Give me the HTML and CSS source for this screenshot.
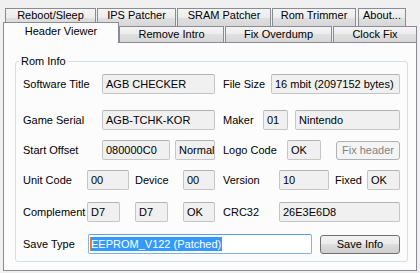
FILE: index.html
```html
<!DOCTYPE html>
<html>
<head>
<meta charset="utf-8">
<title>Header Viewer</title>
<link rel="stylesheet" href="styles.css">
</head>
<body>
<div class="window">
  <div class="tabrow back">
    <div class="tab t-reboot">Reboot/Sleep</div>
    <div class="tab t-ips">IPS Patcher</div>
    <div class="tab t-sram">SRAM Patcher</div>
    <div class="tab t-trim">Rom Trimmer</div>
    <div class="tab t-about">About...</div>
  </div>
  <div class="tabrow front">
    <div class="tab selected t-header">Header Viewer</div>
    <div class="tab t-intro">Remove Intro</div>
    <div class="tab t-overdump">Fix Overdump</div>
    <div class="tab t-clock">Clock Fix</div>
  </div>
  <div class="panel">
    <fieldset class="group">
      <legend>Rom Info</legend>
      <div class="row r1">
        <span class="lbl w79">Software Title</span>
        <span class="box w113">AGB CHECKER</span>
        <span class="lbl w48 gap8">File Size</span>
        <span class="box w129">16 mbit (2097152 bytes)</span>
      </div>
      <div class="row r2">
        <span class="lbl w79">Game Serial</span>
        <span class="box w113">AGB-TCHK-KOR</span>
        <span class="lbl w40 gap8">Maker</span>
        <span class="box w25">01</span>
        <span class="box w105 gap7">Nintendo</span>
      </div>
      <div class="row r3">
        <span class="lbl w79">Start Offset</span>
        <span class="box w68">080000C0</span>
        <span class="box w40 gap5">Normal</span>
        <span class="lbl w64 gap8">Logo Code</span>
        <span class="box w34">OK</span>
        <span class="btn disabled w64 gap15">Fix header</span>
      </div>
      <div class="row r4">
        <span class="lbl w64">Unit Code</span>
        <span class="box w42">00</span>
        <span class="lbl w48 gap6">Device</span>
        <span class="box w32">00</span>
        <span class="lbl w56 gap8">Version</span>
        <span class="box w50">10</span>
        <span class="lbl w32 gap6">Fixed</span>
        <span class="box w33">OK</span>
      </div>
      <div class="row r5">
        <span class="lbl w64">Complement</span>
        <span class="box w33">D7</span>
        <span class="box w33 gap15">D7</span>
        <span class="box w32 gap15">OK</span>
        <span class="lbl w56 gap8">CRC32</span>
        <span class="box w121">26E3E6D8</span>
      </div>
      <div class="row r6">
        <span class="lbl w65">Save Type</span>
        <span class="box input w224"><span class="sel">EEPROM_V122 (Patched)</span></span>
        <span class="btn w80 gap8">Save Info</span>
      </div>
    </fieldset>
  </div>
</div>
</body>
</html>
```

FILE: styles.css
```css
* { box-sizing: border-box; }
html, body { margin: 0; padding: 0; }
body {
  background: #f0f0f0;
  font: 11px "Liberation Sans", Arial, sans-serif;
  color: #000;
  width: 420px;
  height: 273px;
  overflow: hidden;
}
.window { padding-top: 8px; }

/* tabs */
.tabrow { display: flex; }
.back { height: 18px; padding-left: 5px; }
.front { height: 16px; padding-left: 3px; align-items: flex-end; }
.tab {
  border: 1px solid #898c95;
  border-bottom: none;
  background: linear-gradient(#f4f4f4, #ececec 50%, #e0e0e0 50%, #d7d7d7);
  text-align: center;
  line-height: 13px;
  white-space: nowrap;
  margin-right: 1px;
}
.back .tab { height: 18px; padding-top: 0; }
.front .tab { height: 16px; padding-top: 1px; }
.front .selected {
  height: 21px;
  margin-bottom: -1px;
  margin-right: 0;
  padding-top: 2px;
  position: relative;
  z-index: 1;
  background: #fcfcfc;
}
.t-reboot { width: 91px; }
.t-ips { width: 79px; }
.t-sram { width: 94px; }
.t-trim { width: 84px; margin-right: 2px; }
.t-about { width: 48px; }
.t-header { width: 116px; }
.t-intro { width: 105px; }
.t-overdump { width: 107px; }
.t-clock { width: 84px; margin-right: 0; }

/* panel */
.panel {
  margin-left: 3px;
  width: 414px;
  height: 229px;
  border: 1px solid #898c95;
  background: #fcfcfc;
}
.group {
  margin: 12px 8px 0 11px;
  padding: 0 0 7px 0;
  border: 1px solid #d5dfe5;
  border-radius: 3px;
  min-width: 0;
}
.group legend {
  margin-left: 3px;
  padding: 0 2px;
  line-height: 13px;
}

/* rows */
.row {
  display: flex;
  align-items: center;
  height: 20px;
  padding-left: 7px;
}
.r1 { margin-top: 6px; }
.r2 { margin-top: 16px; }
.r3 { margin-top: 10px; }
.r4 { margin-top: 10px; }
.r5 { margin-top: 12px; }
.r6 { margin-top: 12px; }

.lbl { display: block; white-space: nowrap; flex: none; }
.box {
  display: block;
  flex: none;
  height: 20px;
  border: 1px solid #c6c6c6;
  border-top-color: #b0b2b8;
  border-radius: 2px;
  background: #f0f0f0;
  padding: 0 3px;
  line-height: 18px;
  white-space: nowrap;
  overflow: hidden;
}
.box.input {
  background: #fff;
  border-color: #7eb4ea;
  border-top-color: #569de5;
  padding: 1px 1px 0;
  line-height: 14px;
}
.sel {
  display: inline-block;
  background: #3399ff;
  color: #fff;
  border-left: 1px solid #e8771f;
  line-height: 14px;
  padding-right: 1px;
  margin-top: 1px;
}
.btn {
  display: block;
  flex: none;
  height: 19px;
  border: 1px solid #707070;
  border-radius: 3px;
  background: linear-gradient(#f2f2f2, #ebebeb 50%, #dddddd 50%, #cfcfcf);
  text-align: center;
  line-height: 17px;
  white-space: nowrap;
}
.btn.disabled {
  border-color: #adb2b5;
  background: #f4f4f4;
  color: #838383;
}

/* widths and gaps */
.w25 { width: 25px; }
.w32 { width: 32px; }
.w33 { width: 33px; }
.w34 { width: 34px; }
.w40 { width: 40px; }
.w42 { width: 42px; }
.w48 { width: 48px; }
.w50 { width: 50px; }
.w56 { width: 56px; }
.w64 { width: 64px; }
.w65 { width: 65px; }
.w68 { width: 68px; }
.w79 { width: 79px; }
.w80 { width: 80px; }
.w105 { width: 105px; }
.w113 { width: 113px; }
.w121 { width: 121px; }
.w129 { width: 129px; }
.w224 { width: 224px; }
.gap5 { margin-left: 5px; }
.gap6 { margin-left: 6px; }
.gap7 { margin-left: 7px; }
.gap8 { margin-left: 8px; }
.gap15 { margin-left: 15px; }
```
